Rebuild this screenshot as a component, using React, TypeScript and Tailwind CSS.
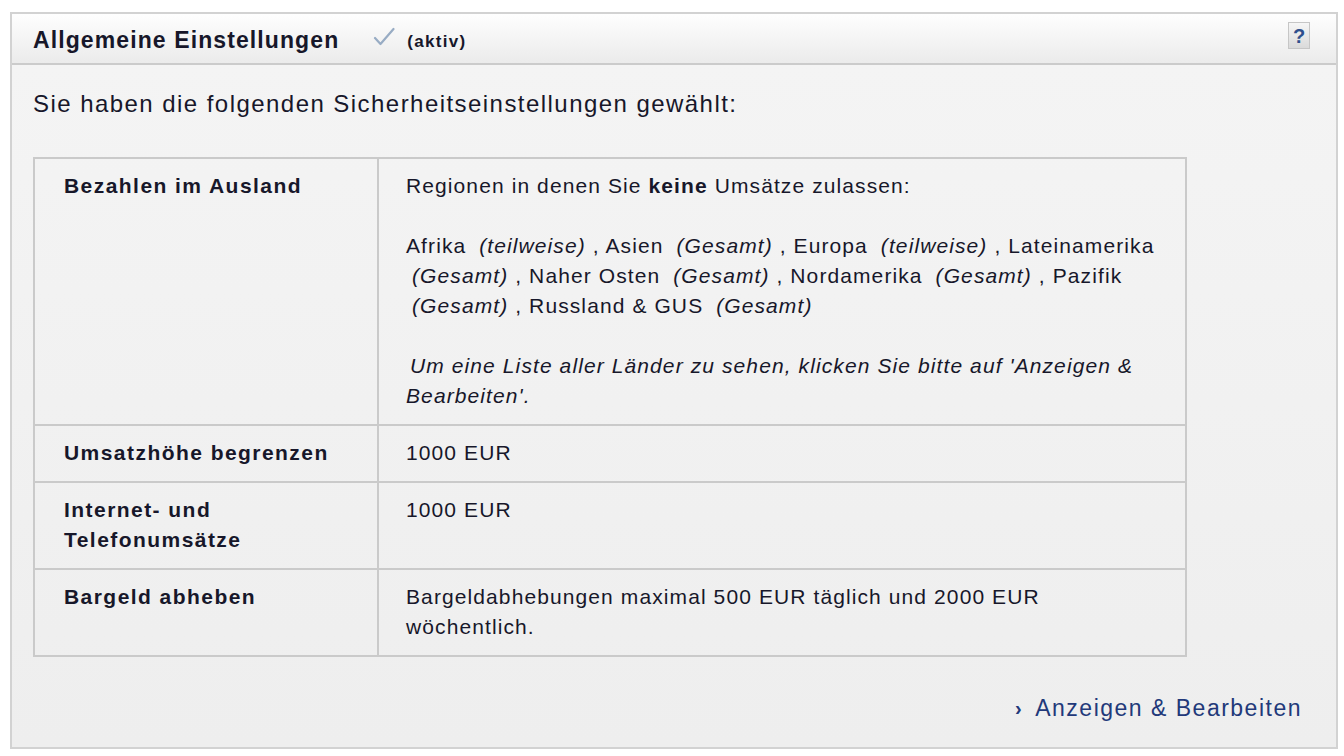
import React from 'react'

const font = { fontFamily: '"Liberation Sans", Arial, Helvetica, sans-serif' }

function Check() {
  return (
    <svg width="22" height="20" viewBox="0 0 22 20" className="mt-[-4px]">
      <path d="M2 11 L7.5 17 L20.5 2" fill="none" stroke="#98acc4" strokeWidth="2.2" strokeLinecap="round" strokeLinejoin="round" />
    </svg>
  )
}

function HelpIcon() {
  return (
    <div className="w-[22px] h-[27px] border border-[#c6c6c6] bg-gradient-to-b from-[#f6f6f6] to-[#dadada] flex items-center justify-center text-[20px] font-bold text-[#2f4f8d] leading-none">
      ?
    </div>
  )
}

const G = ({ children }: { children: React.ReactNode }) => <i className="ml-[6px]">{children}</i>

const rows: { label: string; value: React.ReactNode }[] = [
  {
    label: 'Bezahlen im Ausland',
    value: (
      <>
        <p>
          Regionen in denen Sie <b>keine</b> Umsätze zulassen:
        </p>
        <p className="mt-[30px]">
          Afrika <G>(teilweise)</G> , Asien <G>(Gesamt)</G> , Europa <G>(teilweise)</G> , Lateinamerika <G>(Gesamt)</G> , Naher Osten <G>(Gesamt)</G> , Nordamerika <G>(Gesamt)</G> , Pazifik <G>(Gesamt)</G> , Russland &amp; GUS <G>(Gesamt)</G>
        </p>
        <p className="mt-[30px] italic">
          <span className="ml-[4px]">Um eine Liste aller Länder zu sehen, klicken Sie bitte auf 'Anzeigen &amp; Bearbeiten'.</span>
        </p>
      </>
    ),
  },
  { label: 'Umsatzhöhe begrenzen', value: '1000 EUR' },
  { label: 'Internet- und Telefonumsätze', value: '1000 EUR' },
  { label: 'Bargeld abheben', value: 'Bargeldabhebungen maximal 500 EUR täglich und 2000 EUR wöchentlich.' },
]

export default function App() {
  return (
    <div className="w-[1344px] h-[756px] bg-white pt-[12px] pl-[10px] text-[#17172a]" style={font}>
      <div className="w-[1328px] h-[737px] border-2 border-[#d2d2d2] flex flex-col">
        {/* Kopfzeile */}
        <div className="h-[51px] shrink-0 flex items-center pl-[21px] pr-[26px] bg-gradient-to-b from-[#fefefe] to-[#ebebeb] border-b-2 border-[#cbcbcb]">
          <h2 className="mt-[3px] text-[23px] font-bold tracking-[1.1px] leading-none">Allgemeine Einstellungen</h2>
          <div className="ml-[34px] flex items-center">
            <Check />
            <span className="ml-[12px] mt-[7px] text-[17px] font-bold tracking-[1.3px]">(aktiv)</span>
          </div>
          <div className="ml-auto mt-[-6px]">
            <HelpIcon />
          </div>
        </div>

        {/* Inhalt */}
        <div className="flex-1 flex flex-col bg-gradient-to-b from-[#f4f4f4] to-[#eeeeee] pl-[21px] pr-[34px] pt-[24px]">
          <p className="text-[24px] leading-[30px] tracking-[1.45px]">Sie haben die folgenden Sicherheitseinstellungen gewählt:</p>

          <table className="mt-[38px] w-[1152px] border-collapse border-2 border-[#cacaca] text-[21px] leading-[30px] tracking-[1.1px] table-fixed">
            <colgroup>
              <col className="w-[344px]" />
              <col className="w-[808px]" />
            </colgroup>
            <tbody>
              {rows.map((r) => (
                <tr key={r.label} className="align-top">
                  <td className="border-2 border-[#cacaca] pl-[29px] pr-[26px] pt-[12px] pb-[13px] font-bold tracking-[1.45px]">{r.label}</td>
                  <td className="border-2 border-[#cacaca] pl-[27px] pr-[24px] pt-[12px] pb-[13px]">{r.value}</td>
                </tr>
              ))}
            </tbody>
          </table>

          <div className="mt-auto mb-[24px] flex justify-end">
            <a href="#" className="flex items-center text-[23px] leading-[30px] tracking-[1.5px] text-[#22397a]">
              <span className="font-bold text-[20px] mr-[12px]">›</span>
              Anzeigen &amp; Bearbeiten
            </a>
          </div>
        </div>
      </div>
    </div>
  )
}
